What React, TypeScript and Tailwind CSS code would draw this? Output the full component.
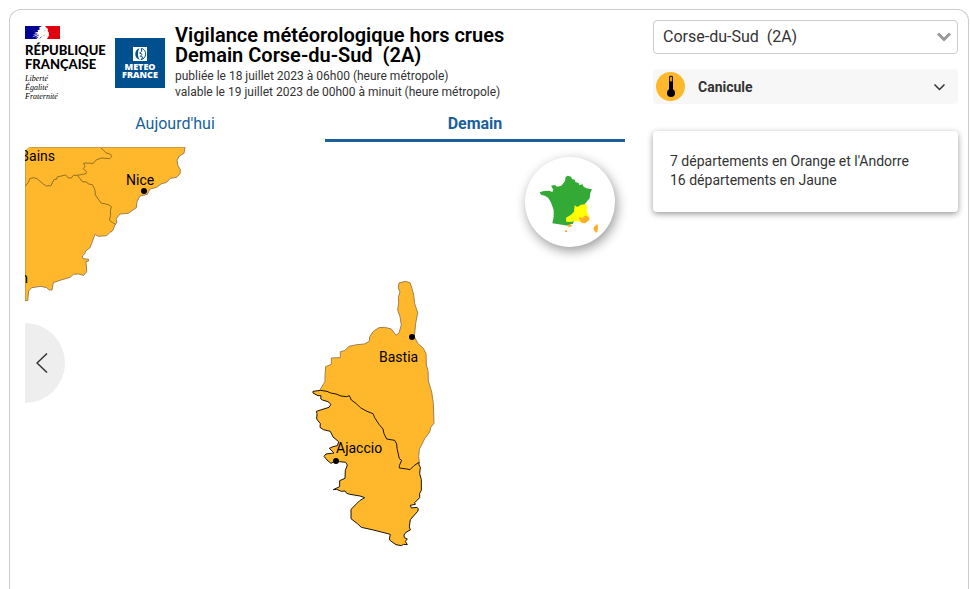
import { useState } from "react";

const INLAND = "#ffb72b";

function RepubliqueLogo() {
  return (
    <div className="w-20 shrink-0 pt-px font-['Lato',sans-serif] text-black">
      <svg width="35" height="13" viewBox="0 0 105 39" aria-hidden="true" className="block">
        <path d="M0 0H52V39H0Z" fill="#000091" />
        <path d="M58 0H105V39H66L72 26Z" fill="#e1000f" />
        <path
          d="M43 4 52 0H60L65 6 69 9 68 15 72 20 70 25 71 31 66 33 60 39H34L41 32 31 35 37 29 22 33 31 27 24 25 37 22 28 19 40 18 37 13 44 11Z"
          fill="#fff"
        />
        <path d="M25 28 38 24M30 32 42 27M44 37 50 32" stroke="#000091" strokeWidth="2" />
        <path d="M57 15h4M60 25 55 31" stroke="#999" strokeWidth="2" />
      </svg>
      <p className="mt-1 text-[13px] leading-[14px] font-black">
        RÉPUBLIQUE
        <br />
        FRANÇAISE
      </p>
      <p className="mt-[3px] font-['Liberation_Serif',serif] text-[8px] leading-[9px] italic">
        Liberté
        <br />
        Égalité
        <br />
        Fraternité
      </p>
    </div>
  );
}

function MeteoFranceLogo() {
  return (
    <div className="flex size-[50px] shrink-0 flex-col items-center bg-[#00508f] pt-[9px] text-white">
      <svg width="14" height="14" viewBox="0 0 42 42" aria-hidden="true">
        <path d="M0 0H42V42H0Z" fill="#fff" />
        <path d="M20 4C3 7 2 34 20 38C13 29 13 13 20 4Z" fill="#00508f" />
        <path
          d="M25 4C43 8 42 35 24 38L30 31 22 28 27 22 20 18 26 13Z"
          fill="#fff"
          stroke="#00508f"
          strokeWidth="3"
        />
      </svg>
      <p className="mt-0.5 text-center font-['Open_Sans',sans-serif] text-[9px] leading-[8px] font-extrabold">
        METEO
        <br />
        FRANCE
      </p>
    </div>
  );
}

function RegionMap() {
  return (
    <svg
      viewBox="0 0 600 400"
      className="block w-full"
      role="img"
      aria-label="Carte de vigilance de la Corse-du-Sud"
    >
      <g transform="translate(-10 -7) scale(0.333333)" strokeLinejoin="round">
        <path
          d="M30 21H510L507 40 493 48 486 60 489 78 496 88 495 101 485 112 466 115 455 127 438 132 425 142 405 147 397 163 375 168 366 185 364 203 340 220 315 222 303 237 306 246 300 255 293 272 285 277 275 287 250 289 240 283 230 310 225 323 212 333 209 341 202 348 204 356 221 358 220 364 213 364 215 395 206 406 190 402 175 403 165 412 138 420 115 428 111 450 103 450 95 443 78 439 50 443 41 453 38 482H30Z"
          fill={INLAND}
          stroke="#a08050"
          strokeWidth="3"
        />
        <path
          d="M30 139 41 126 44 116 55 113 66 116 78 126 86 133 95 138 108 137 113 126 117 119 126 117 126 111 152 105 160 114 169 114 175 106 187 106 213 101 214 94 204 86 210 80 206 69 235 70 242 61 258 54 284 56 290 50 287 43 272 38 266 31 258 24M187 106 202 125 215 126 220 132 232 134 240 150 241 165 258 189 280 194 289 200 286 213 287 226 283 240 293 248 302 253"
          fill="none"
          stroke="#937022"
          strokeWidth="3"
        />
        <path d="M28 20H48Q32 23 30 39H28Z" fill="#fff" />
      </g>
      <g transform="translate(275 123) scale(0.333333)" strokeLinejoin="round">
        <path
          d="M60 360 71 341 75 334V318L77 290 94 283V264L121 263V245L134 242 147 229 171 224 193 222 208 214 209 201 220 184 237 173 254 172 274 177 288 196 297 189 304 165 300 140 293 120 296 98 295 82 300 66 295 54 297 39 316 34 330 38 336 56 341 75 344 101 353 128 347 160 343 200 353 220 370 235 378 251 379 285 384 302 385 333 395 366 400 400 402 460 392 472 389 486 374 506 358 538 356 560 358 577 331 620 290 620 250 560 150 450 100 385Z"
          fill={INLAND}
          stroke="#a08050"
          strokeWidth="3"
        />
        <path
          d="M39 364 62 361 81 364 92 369 108 372 123 378 140 380 148 377 154 390 169 401 181 413 201 424 219 431 224 443 237 463 249 477 252 491 260 507 284 511 290 522 291 535 298 566 305 571 298 587V594L320 597 330 599 342 587 357 577 357 585 361 592 359 611 364 629V661L359 670 359 683 344 698 346 703 331 706 334 714 351 712 355 717 353 724 331 749 328 770 331 780 319 786 312 795 313 803 322 807 316 814 322 824 311 823 304 827 288 824 271 812 268 807 271 793 220 780 184 772 172 761 153 746V718L179 692 194 683 180 678 150 673 140 670 135 663 124 664 110 658 100 659 119 650V632L135 625 136 601 142 585 137 577 119 575 103 575 93 580 81 570 72 559 78 552 102 549 88 535 99 530 112 527 116 515 99 501 91 484 70 479 60 472 61 461 50 447 51 431 49 424 87 412 93 403 84 395 67 390 62 386 63 377 54 377 39 369Z"
          fill={INLAND}
          stroke="#17130a"
          strokeWidth="3"
        />
      </g>
      <g className="font-['Roboto',sans-serif] text-sm" fill="#000">
        <text x="30" y="14" textAnchor="end">Bains</text>
        <text x="3" y="136" textAnchor="end">n</text>
        <text x="101" y="38">Nice</text>
        <text x="354" y="215">Bastia</text>
        <text x="311" y="306">Ajaccio</text>
        <circle cx="119" cy="44" r="3" />
        <circle cx="387" cy="190" r="3" />
        <circle cx="311" cy="314" r="3" />
      </g>
    </svg>
  );
}

function FranceThumbnail() {
  return (
    <svg viewBox="0 0 270 270" className="size-full" aria-hidden="true">
      <path
        d="M122 60 128 56 138 59 141 66 150 69 151 75 161 78 163 84 172 82 176 89 184 94 201 97 196 107 194 124 180 140 177 151 169 156 154 178 143 201H136L133 207 111 203 82 199 86 179 86 159 79 139 70 123 61 117 48 113 44 106 57 102 73 101 82 105 85 98 78 86 90 84 96 89 109 86 120 72Z"
        fill="#33a936"
      />
      <path
        d="M149 145 157 150 168 143 184 142 187 152 185 163 192 178 189 188 175 198 155 192 141 194 124 195 123 182 137 174 147 164Z"
        fill="#ffff00"
      />
      <path
        d="M161 181 173 182 181 175 194 183 192 190 181 199 170 197 164 189ZM126 204 139 202 141 208 131 211ZM119 220 125 220 126 225 120 225ZM206 211 217 201 219 207 218 222 214 228 206 219Z"
        fill="#ffae2b"
      />
    </svg>
  );
}

export default function App() {
  const [day, setDay] = useState("demain");
  const [open, setOpen] = useState(false);

  const tab =
    "flex-1 cursor-pointer border-b-[3px] pb-1 text-base leading-[23px] text-[#1a5f9c]";

  return (
    <div className="flex min-h-screen flex-col bg-white pt-[9px] pr-px pl-[9px] font-['Roboto',sans-serif] text-[#333]">
      <main className="flex flex-1 items-start gap-7 rounded-t-xl border border-b-0 border-[#ccc] pt-[10px] pr-[10px] pl-[15px]">
        <section className="min-w-0 flex-1">
          <header className="flex gap-[10px] pt-[5px]">
            <RepubliqueLogo />
            <div className="pt-[13px]">
              <MeteoFranceLogo />
            </div>
            <div>
              <h1 className="text-xl leading-5 font-semibold whitespace-pre text-black">
                {"Vigilance météorologique hors crues\nDemain Corse-du-Sud  (2A)"}
              </h1>
              <p className="mt-[3px] text-xs leading-4">
                publiée le 18 juillet 2023 à 06h00 (heure métropole)
                <br />
                valable le 19 juillet 2023 de 00h00 à minuit (heure métropole)
              </p>
            </div>
          </header>

          <nav className="mt-[11px] flex">
            <button
              type="button"
              onClick={() => setDay("aujourdhui")}
              className={`${tab} ${day === "aujourdhui" ? "border-[#1a5f9c] font-bold" : "border-transparent"}`}
            >
              Aujourd'hui
            </button>
            <button
              type="button"
              onClick={() => setDay("demain")}
              className={`${tab} ${day === "demain" ? "border-[#1a5f9c] font-bold" : "border-transparent"}`}
            >
              Demain
            </button>
          </nav>

          <div className="relative mt-[5px]">
            <RegionMap />
            <button
              type="button"
              aria-label="Carte de France"
              className="absolute top-[10px] right-[10px] size-[90px] cursor-pointer rounded-full bg-white shadow-[2px_4px_12px_rgba(0,0,0,0.4)]"
            >
              <FranceThumbnail />
            </button>
            <button
              type="button"
              aria-label="Précédent"
              className="absolute top-44 left-0 flex h-20 w-10 cursor-pointer items-center rounded-r-full bg-[#eee] pl-[11px]"
            >
              <svg width="12" height="20" viewBox="0 0 12 20" fill="none" stroke="#333" strokeWidth="1.5">
                <path d="M11 0.5 1 10 11 19.5" />
              </svg>
            </button>
          </div>
        </section>

        <aside className="w-[305px] shrink-0">
          <div className="relative">
            <select
              aria-label="Département"
              className="block h-[34px] w-full appearance-none rounded border border-[#ccc] bg-white pr-8 pl-[9px] text-base whitespace-pre text-[#333]"
            >
              <option>{"Corse-du-Sud \u00a0(2A)"}</option>
            </select>
            <svg
              width="14"
              height="10"
              viewBox="0 0 14 10"
              className="pointer-events-none absolute top-3 right-[7px]"
              fill="none"
              stroke="#999"
              strokeWidth="3"
              aria-hidden="true"
            >
              <path d="M1 1.5 7 7.5 13 1.5" />
            </svg>
          </div>

          <button
            type="button"
            aria-expanded={open}
            onClick={() => setOpen(!open)}
            className="mt-[15px] flex h-[35px] w-full cursor-pointer items-center rounded bg-[#f7f7f7] pr-[13px] pl-[3px] text-left text-sm font-bold"
          >
            <svg width="29" height="29" viewBox="0 0 87 87" aria-hidden="true">
              <circle cx="43.500" cy="43.500" r="43.500" fill={INLAND} />
              <path d="M41 13h8v47h-8Z" fill={INLAND} stroke="#000" strokeWidth="3" />
              <path d="M39 28h12v32H39Z" />
              <circle cx="45" cy="63" r="12" />
            </svg>
            <span className="ml-[13px] flex-1">Canicule</span>
            <svg
              width="11"
              height="7"
              viewBox="0 0 11 7"
              className="mt-[2px]"
              fill="none"
              stroke="#333"
              strokeWidth="1.5"
              aria-hidden="true"
            >
              <path d="M0.500 0.500 5.500 5.500 10.500 0.500" />
            </svg>
          </button>

          <div className="mt-[27px] rounded px-[17px] pt-[21px] pb-[22px] text-sm leading-[19px] shadow-[0_2px_6px_rgba(0,0,0,0.4)]">
            <p>7 départements en Orange et l'Andorre</p>
            <p>16 départements en Jaune</p>
          </div>
        </aside>
      </main>
    </div>
  );
}
